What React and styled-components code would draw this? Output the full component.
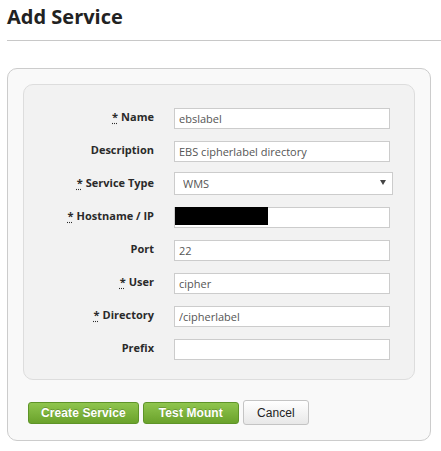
import React from "react";
import styled, { createGlobalStyle } from "styled-components";

const Global = createGlobalStyle`
  html, body { margin: 0; padding: 0; background: #fff; }
  body { font-family: "Open Sans", "DejaVu Sans", sans-serif; }
`;

const Page = styled.div`
  padding-left: 7px;
  width: 441px;
  box-sizing: border-box;
`;

const Header = styled.div`
  padding: 3px 0 9px 0;
  border-bottom: 1px solid #c8c8c8;
`;

const Title = styled.h1`
  margin: 0;
  font-family: "Open Sans", sans-serif;
  font-size: 20px;
  line-height: 28px;
  font-weight: 700;
  color: #222;
`;

const Panel = styled.div`
  margin: 27px 10px 0 0;
  padding: 15px;
  border: 1px solid #cccccc;
  border-radius: 10px;
  background: #f9f9f9;
`;

const Fieldset = styled.div`
  display: flex;
  flex-direction: column;
  gap: 12px;
  padding: 21px 0;
  border: 1px solid #dddddd;
  border-radius: 10px;
  background: #f2f2f2;
`;

const Row = styled.div`
  display: grid;
  grid-template-columns: 130px 1fr;
  column-gap: 20px;
  align-items: center;
  height: 21px;
`;

const Label = styled.label`
  text-align: right;
  font-family: "Open Sans", sans-serif;
  font-size: 11px;
  font-weight: 700;
  color: #2a2a2a;
  white-space: nowrap;
`;

const Req = styled.abbr`
  text-decoration: underline dotted;
  text-underline-offset: 2px;
  cursor: help;
  margin-right: 3px;
`;

const Field = styled.div`
  position: relative;
  width: 216px;
  height: 21px;
`;

const Input = styled.input`
  box-sizing: border-box;
  width: 100%;
  height: 100%;
  margin: 0;
  padding: 0 4px;
  border: 1px solid #cccccc;
  background: #fff;
  font-family: "Open Sans", sans-serif;
  font-size: 11px;
  color: #555;
  outline: none;
`;

const Redaction = styled.span`
  position: absolute;
  left: 1px;
  top: 2px;
  width: 93px;
  height: 18px;
  background: #000;
`;

const SelectWrap = styled.div`
  position: relative;
  width: 219px;
  height: 23px;
  margin: -1px 0;
`;

const Select = styled.select`
  box-sizing: border-box;
  width: 100%;
  height: 100%;
  margin: 0;
  padding: 0 0 0 8px;
  border: 1px solid #cccccc;
  border-radius: 0;
  background: #fff;
  appearance: none;
  -webkit-appearance: none;
  font-family: "Open Sans", sans-serif;
  font-size: 11px;
  color: #555;
  outline: none;
`;

const Arrow = styled.svg`
  position: absolute;
  right: 7px;
  top: 9px;
  pointer-events: none;
`;

const ButtonBar = styled.div`
  display: flex;
  align-items: center;
  gap: 4px;
  margin-top: 20px;
  padding-left: 5px;
  height: 25px;
`;

const Button = styled.button`
  box-sizing: border-box;
  margin: 0;
  padding: 0 ${(p) => p.$px}px;
  font-family: "Liberation Sans", Arial, sans-serif;
  font-size: 12px;
  letter-spacing: 0.1px;
  border-radius: 3px;
  cursor: pointer;
  ${(p) =>
    p.$primary
      ? `
    height: 22px;
    font-weight: 700;
    color: #fff;
    text-shadow: 0 -1px 0 rgba(0,0,0,0.2);
    border: 1px solid #5e9428;
    background: linear-gradient(#8fc54e, #6aa22b);
  `
      : `
    height: 25px;
    font-weight: 400;
    color: #222;
    border: 1px solid #c4c4c4;
    background: linear-gradient(#ffffff, #e8e8e8);
  `}
`;

const fields = [
  { label: "Name", req: true, value: "ebslabel" },
  { label: "Description", value: "EBS cipherlabel directory" },
  { label: "Service Type", req: true, select: true, value: "WMS" },
  { label: "Hostname / IP", req: true, value: "", redacted: true },
  { label: "Port", value: "22" },
  { label: "User", req: true, value: "cipher" },
  { label: "Directory", req: true, value: "/cipherlabel" },
  { label: "Prefix", value: "" },
];

export default function App() {
  return (
    <Page>
      <Global />
      <Header>
        <Title>Add Service</Title>
      </Header>
      <Panel>
        <Fieldset>
          {fields.map((f) => (
            <Row key={f.label}>
              <Label>
                {f.req && <Req title="required">*</Req>}
                {f.label}
              </Label>
              {f.select ? (
                <SelectWrap>
                  <Select defaultValue={f.value}>
                    <option>WMS</option>
                  </Select>
                  <Arrow width="6" height="5" viewBox="0 0 6 5">
                    <path d="M0 0H6L3 5Z" fill="#444" />
                  </Arrow>
                </SelectWrap>
              ) : (
                <Field>
                  <Input defaultValue={f.value} readOnly />
                  {f.redacted && <Redaction />}
                </Field>
              )}
            </Row>
          ))}
        </Fieldset>
        <ButtonBar>
          <Button $primary $px={12}>Create Service</Button>
          <Button $primary $px={15}>Test Mount</Button>
          <Button $px={13}>Cancel</Button>
        </ButtonBar>
      </Panel>
    </Page>
  );
}
